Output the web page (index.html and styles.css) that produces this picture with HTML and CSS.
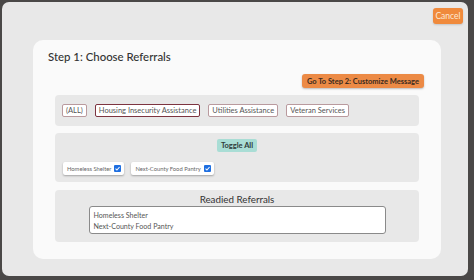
FILE: index.html
```html
<!DOCTYPE html>
<html>
<head>
<meta charset="utf-8">
<link rel="stylesheet" href="styles.css">
</head>
<body>
<div class="overlay">
  <div class="modal">
    <div class="modal-top">
      <button class="cancel">Cancel</button>
    </div>
    <div class="card">
      <h2 class="title">Step 1: Choose Referrals</h2>
      <div class="next-row">
        <button class="next">Go To Step 2: Customize Message</button>
      </div>
      <div class="section cats">
        <span class="chip">(ALL)</span>
        <span class="chip active">Housing Insecurity Assistance</span>
        <span class="chip">Utilities Assistance</span>
        <span class="chip">Veteran Services</span>
      </div>
      <div class="section picks">
        <div class="toggle-row"><button class="toggle">Toggle All</button></div>
        <div class="pick-row">
          <label class="pick">Homeless Shelter <span class="box"><svg viewBox="0 0 10 10" width="7" height="7"><rect width="10" height="10" rx="1.5" fill="#1f6fe0"/><path d="M2.2 5.2 L4.2 7.2 L7.9 2.9" stroke="#fff" stroke-width="1.5" fill="none"/></svg></span></label>
          <label class="pick">Next-County Food Pantry <span class="box"><svg viewBox="0 0 10 10" width="7" height="7"><rect width="10" height="10" rx="1.5" fill="#1f6fe0"/><path d="M2.2 5.2 L4.2 7.2 L7.9 2.9" stroke="#fff" stroke-width="1.5" fill="none"/></svg></span></label>
        </div>
      </div>
      <div class="section ready">
        <div class="ready-title">Readied Referrals</div>
        <div class="textarea">Homeless Shelter<br>Next-County Food Pantry</div>
      </div>
    </div>
  </div>
</div>
</body>
</html>
```
FILE: styles.css
```css
* { box-sizing: border-box; }
html, body { margin: 0; padding: 0; }
body {
  width: 474px; height: 280px;
  background: #4a4847;
  font-family: "Lato", "Open Sans", sans-serif;
  overflow: hidden;
}
.overlay { padding: 2px 6px 4px 2px; height: 280px; }
.modal {
  height: 274px;
  background: #e8e8e8;
  border-radius: 7px;
  display: flex; flex-direction: column;
  padding: 6px 5px 17px 31px;
}
.modal-top { display: flex; justify-content: flex-end; height: 32px; }
.cancel {
  height: 16px; width: 30px; padding: 0;
  background: #f08a3c; border: none; border-radius: 3px;
  color: #fde9d6; font-family: inherit; font-size: 8.5px;
  box-shadow: 0 1px 2px rgba(0,0,0,0.15);
}
.card {
  flex: 1;
  margin-right: 22px;
  background: #fafafa;
  border-radius: 10px;
  padding: 8px 17px 17px 15px;
  display: flex; flex-direction: column;
}
.title { margin: 0; font-size: 11.4px; font-weight: 500; color: #333; line-height: 18px; }
.next-row { display: flex; justify-content: flex-end; margin-top: 8px; }
.next {
  height: 14px; padding: 0 5px;
  background: #ec8a45; border: none; border-radius: 3px;
  color: #3a2a20; font-family: inherit; font-weight: 700; font-size: 7.5px;
  box-shadow: 0 1px 2px rgba(0,0,0,0.25);
}
.section {
  margin: 0 5px 0 7px;
  background: #e8e8e8;
  border-radius: 4px;
}
.cats {
  margin-top: 7px;
  height: 31px;
  display: flex; align-items: center; gap: 8px;
  padding: 0 7px;
}
.chip {
  height: 13px; padding: 0 3px;
  display: inline-flex; align-items: center;
  background: #fff; border: 1px solid #b99a9e; border-radius: 2px;
  font-size: 7.5px; color: #555;
}
.chip.active { border-color: #7d3440; }
.picks { margin-top: 7px; height: 49px; padding: 6px 8px 0 8px; }
.toggle-row { display: flex; justify-content: center; }
.toggle {
  height: 13px; padding: 0 4px;
  background: #a9ddd5; border: none; border-radius: 2px;
  font-family: inherit; font-weight: 700; font-size: 7.5px; color: #2e3b3a;
}
.pick-row { display: flex; gap: 7px; margin-top: 10px; }
.pick {
  height: 13px; padding: 0 3px 0 4px;
  display: inline-flex; align-items: center; gap: 3px;
  background: #fff; border-radius: 2px;
  box-shadow: 0 1px 2px rgba(0,0,0,0.3);
  font-size: 5.8px; color: #666;
}
.box { display: inline-flex; }
.ready { margin-top: 8px; height: 52px; display: flex; flex-direction: column; align-items: center; padding-top: 2px; }
.ready-title { font-size: 9.8px; color: #333; line-height: 14px; }
.textarea {
  width: 297px; height: 28px;
  background: #fff; border: 1px solid #8a8a8a; border-radius: 3px;
  padding: 3px 4px; font-size: 7.1px; line-height: 11px; color: #555;
}
```
